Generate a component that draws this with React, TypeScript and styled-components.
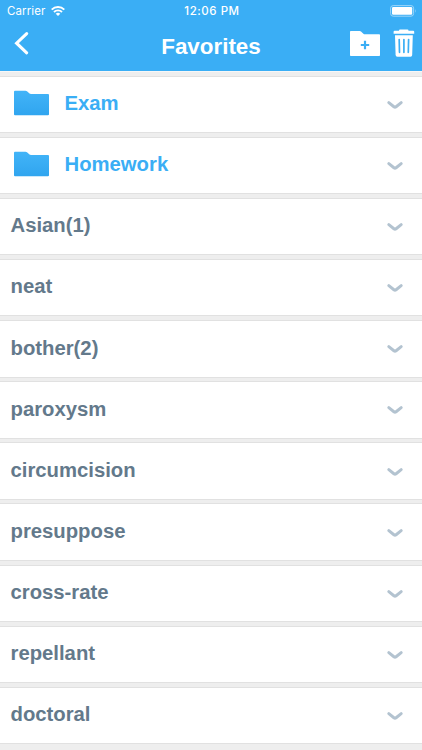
import React from 'react';
import styled, { createGlobalStyle } from 'styled-components';

const colors = {
  blue: '#3aaef5',
  slate: '#63798b',
  chevron: '#b3c3d0',
  gap: '#eeeeee',
  edge: '#e1e1e1',
};

const GlobalStyle = createGlobalStyle`
  * {
    box-sizing: border-box;
  }
  body {
    margin: 0;
    background: ${colors.gap};
    font-family: "Liberation Sans", Arial, sans-serif;
  }
`;

const Screen = styled.div`
  width: 100%;
  height: 750px;
  overflow: hidden;
  background: ${colors.gap};
`;

const Header = styled.header`
  height: 71px;
  background: ${colors.blue};
  color: white;
`;

const StatusBar = styled.div`
  height: 22px;
  padding: 0 5px 0 7px;
  display: grid;
  grid-template-columns: 1fr auto 1fr;
  align-items: center;
  font-family: Inter, sans-serif;
  font-size: 11.5px;
  line-height: 22px;
`;

const Carrier = styled.div`
  display: flex;
  align-items: center;
  gap: 6px;
  letter-spacing: 0.1px;
`;

const Clock = styled.div`
  font-weight: 500;
  letter-spacing: 0.55px;
`;

const Battery = styled.svg`
  justify-self: end;
`;

const NavBar = styled.div`
  height: 49px;
  padding: 0 7px 0 14px;
  display: grid;
  grid-template-columns: 1fr auto 1fr;
  align-items: start;
`;

const Title = styled.h1`
  margin: 11px 7px 0 0;
  font-size: 22.4px;
  line-height: 27px;
  font-weight: bold;
`;

const BackIcon = styled.svg`
  display: block;
  margin-top: 9px;
`;

const Actions = styled.div`
  display: flex;
  justify-content: flex-end;
  gap: 13px;
  padding-top: 7px;
`;

const List = styled.ul`
  list-style: none;
  margin: 0;
  padding: 4.7px 0 0;
  border-top: 1px solid #f7f7f7;
`;

const Row = styled.li`
  height: 55.4px;
  margin-bottom: 5.72px;
  padding: 0 18px 0 10.5px;
  display: flex;
  align-items: center;
  background: white;
  box-shadow: 0 0 0 1px ${colors.edge};
`;

const FolderIcon = styled.svg`
  margin: 0 15.5px 3px 3.5px;
`;

const ChevronIcon = styled.svg`
  margin-top: 1px;
`;

const Label = styled.span<{ $folder?: boolean }>`
  flex: 1;
  font-size: 20.3px;
  line-height: 24px;
  font-weight: bold;
  padding-bottom: 2.6px;
  color: ${(props) => (props.$folder ? colors.blue : colors.slate)};
`;

const folders = ['Exam', 'Homework'];

const words = [
  'Asian(1)',
  'neat',
  'bother(2)',
  'paroxysm',
  'circumcision',
  'presuppose',
  'cross-rate',
  'repellant',
  'doctoral',
];

const Wifi = () => (
  <svg width="14" height="11" viewBox="0 0 14 11" fill="none" stroke="white" strokeWidth="1.9">
    <path d="M0.7 3.6a8.9 8.9 0 0 1 12.6 0" />
    <path d="M3 6a5.7 5.7 0 0 1 8 0" />
    <path d="M4.7 7.8a3.3 3.3 0 0 1 4.6 0L7 10.1z" fill="white" stroke="none" />
  </svg>
);

const Chevron = () => (
  <ChevronIcon width="18" height="10" viewBox="0 0 18 10" fill="none">
    <path
      d="M2.8 2.6L7.9 6.7Q9 7.5 10.1 6.7L15.2 2.6"
      stroke={colors.chevron}
      strokeWidth="3"
      strokeLinecap="round"
    />
  </ChevronIcon>
);

const Folder = () => (
  <FolderIcon width="35" height="26" viewBox="0 0 35 26">
    <defs>
      <linearGradient id="folder" x1="0" y1="0" x2="0" y2="1">
        <stop offset="0" stopColor="#42b4f8" />
        <stop offset="1" stopColor="#30a5ef" />
      </linearGradient>
    </defs>
    <path
      d="M1 0.7H11.5Q12.5 0.7 13.3 1.5L15.5 3.6Q16 4 17 4H34Q35 4 35 5V24.3Q35 25.3 34 25.3H1Q0 25.3 0 24.3V1.7Q0 0.7 1 0.7z"
      fill="url(#folder)"
    />
  </FolderIcon>
);

const NewFolder = () => (
  <svg width="30" height="29" viewBox="0 0 30 29">
    <path
      d="M0.8 2H9.7Q10.5 2 11 2.5L13.4 4.7Q14 5.2 15 5.2H29.2Q30 5.2 30 6V26.2Q30 27 29.2 27H0.8Q0 27 0 26.2V2.8Q0 2 0.8 2z"
      fill="white"
    />
    <path d="M15 11.8V20.2M10.8 16H19.2" stroke={colors.blue} strokeWidth="2.2" />
  </svg>
);

const Trash = () => (
  <svg width="22" height="29" viewBox="0 0 22 29">
    <path
      d="M7 0.4H14.5Q15.5 0.4 15.5 1.8H20.2Q21.2 1.8 21.2 2.8V4.8H0.6V2.8Q0.6 1.8 1.6 1.8H6Q6 0.4 7 0.4z"
      fill="white"
    />
    <path d="M2 6.3H19.8L19.2 26Q19.1 27.7 17.5 27.7H4.3Q2.7 27.7 2.6 26z" fill="white" />
    <path
      d="M6.2 10.5L6.5 23.3M10.9 10.5V23.3M15.6 10.5L15.3 23.3"
      stroke={colors.blue}
      strokeWidth="1.7"
      strokeLinecap="round"
    />
  </svg>
);

const App = () => {
  return (
    <Screen>
      <GlobalStyle />
      <Header>
        <StatusBar>
          <Carrier>
            Carrier
            <Wifi />
          </Carrier>
          <Clock>12:06 PM</Clock>
          <Battery width="27" height="12" viewBox="0 0 27 12">
            <rect x="0.6" y="0.6" width="23" height="10.6" rx="2.6" fill="none" stroke="#9bd6fa" />
            <rect x="2" y="2" width="20.2" height="7.8" rx="1.2" fill="white" />
            <path d="M25 4Q26.4 5.9 25 7.8z" fill="#9bd6fa" />
          </Battery>
        </StatusBar>
        <NavBar>
          <BackIcon width="16" height="24" viewBox="0 0 16 24" fill="none">
            <path
              d="M12.7 2.6L2.6 12.2L12.7 21.8"
              stroke="white"
              strokeWidth="3.1"
              strokeLinecap="round"
              strokeLinejoin="miter"
            />
          </BackIcon>
          <Title>Favorites</Title>
          <Actions>
            <NewFolder />
            <Trash />
          </Actions>
        </NavBar>
      </Header>

      <List>
        {folders.map((name) => (
          <Row key={name}>
            <Folder />
            <Label $folder>{name}</Label>
            <Chevron />
          </Row>
        ))}
        {words.map((word) => (
          <Row key={word}>
            <Label>{word}</Label>
            <Chevron />
          </Row>
        ))}
      </List>
    </Screen>
  );
};

export default App;
